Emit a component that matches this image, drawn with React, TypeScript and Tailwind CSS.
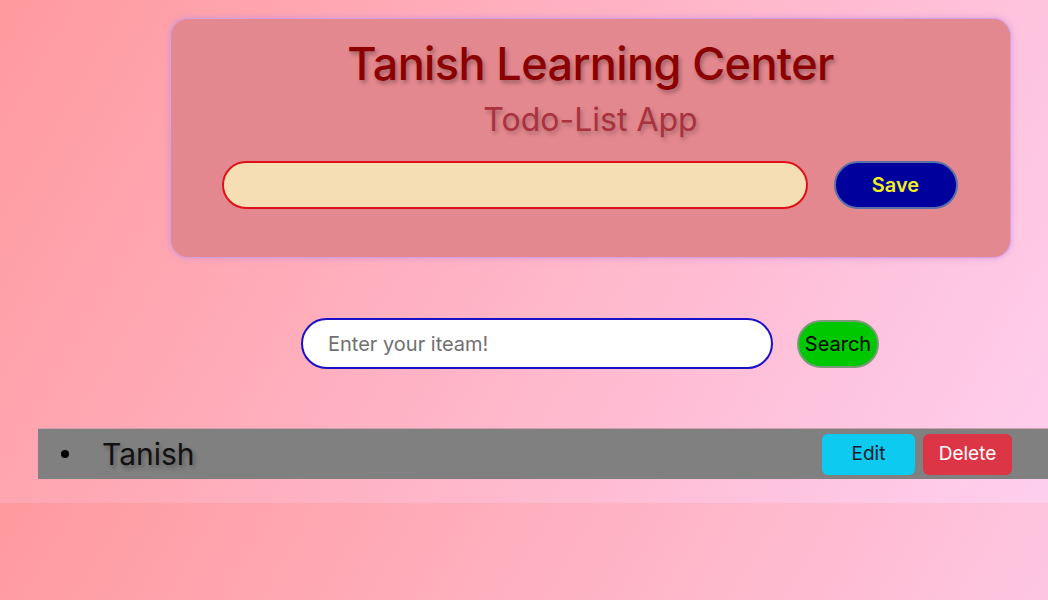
export default function App() {
  return (
    <div
      className="w-[1048px] h-[600px] overflow-hidden bg-[linear-gradient(120deg,#ff9a9e_0%,#fecfef_100%)] bg-[length:100%_503px] bg-repeat-y"
      style={{ fontFamily: "Inter, 'Noto Sans', sans-serif" }}
    >
      <div className="h-[503px] flex flex-col">
        <div className="pt-[18px] pl-[170px]">
          <div className="w-[841px] h-[240px] rounded-[18px] bg-[#e4888f] border border-[#d7a0dc] shadow-[0_0_6px_rgba(200,140,230,0.7)] flex flex-col items-center">
            <h1 className="mt-[19px] text-[45px] leading-[52px] font-medium text-[#8b0000] tracking-[-0.6px] [text-shadow:2px_3px_4px_rgba(0,0,0,0.3)]">
              Tanish Learning Center
            </h1>
            <h2 className="mt-[10px] text-[32px] leading-[40px] text-[#a8323e] [text-shadow:2px_3px_4px_rgba(0,0,0,0.25)]">
              Todo-List App
            </h2>
            <div className="mt-[21px] flex items-center gap-[26px] -ml-[2px]">
              <input className="w-[586px] h-[48px] rounded-full bg-[#f5deb3] border-2 border-[#e0101a] outline-none px-4" />
              <button className="w-[124px] h-[48px] rounded-full bg-[#00009c] border-2 border-[#5a6fa8] text-[#f0f020] text-[20px] font-semibold">
                Save
              </button>
            </div>
          </div>
        </div>
        <div className="mt-[60px] w-[1180px] flex justify-center items-center gap-[24px]">
          <input
            placeholder="Enter your iteam!"
            className="w-[472px] h-[51px] rounded-full bg-white border-2 border-[#1a10c8] outline-none pl-[25px] text-[20px] placeholder:text-[#707070]"
          />
          <button className="w-[82px] h-[48px] rounded-full bg-[#00c800] border-2 border-[#7a9a7a] text-black text-[20px]">
            Search
          </button>
        </div>
        <div className="mt-[59px] ml-[38px] w-[1010px] h-[51px] bg-[#808080] border-t border-[#c9a0a8] flex items-center pr-[36px]">
          <span className="ml-[23px] w-[8px] h-[8px] rounded-full bg-black"></span>
          <span className="ml-[33px] flex-1 text-[30px] text-[#111] [text-shadow:2px_3px_4px_rgba(0,0,0,0.3)]">
            Tanish
          </span>
          <button className="w-[93px] h-[41px] rounded-[6px] bg-[#0dcaf0] text-[#1a1a2a] text-[19px]">
            Edit
          </button>
          <button className="ml-[8px] w-[89px] h-[41px] rounded-[6px] bg-[#dc3545] text-white text-[19px]">
            Delete
          </button>
        </div>
      </div>
    </div>
  );
}
